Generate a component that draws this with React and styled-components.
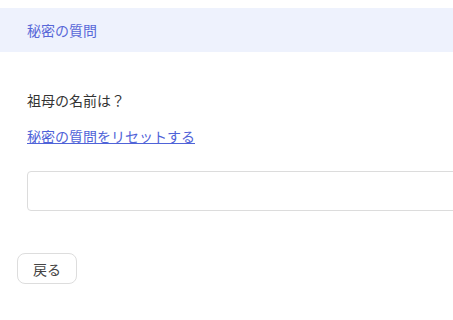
import styled, { createGlobalStyle } from 'styled-components';

const GlobalStyle = createGlobalStyle`
  body {
    margin: 0;
    background: #ffffff;
    font-family: "Noto Sans CJK JP", "Noto Sans", sans-serif;
  }
`;

const Page = styled.div`
  padding-top: 8px;
  overflow: hidden;
`;

const Header = styled.div`
  height: 44px;
  display: flex;
  align-items: center;
  padding-left: 27px;
  background-color: #eef2fd;
  color: #5868d8;
  font-size: 14px;
`;

const Content = styled.div`
  padding: 0 27px;
  display: flex;
  flex-direction: column;
  align-items: flex-start;
`;

const Question = styled.p`
  margin: 38px 0 0;
  font-size: 14px;
  line-height: 20px;
  color: #333333;
`;

const ResetLink = styled.a`
  margin-top: 16px;
  font-size: 14px;
  line-height: 20px;
  color: #4f63d8;
  text-decoration: underline;
  cursor: pointer;
`;

const AnswerInput = styled.input`
  margin-top: 25px;
  width: 480px;
  flex-shrink: 0;
  height: 40px;
  box-sizing: border-box;
  border: 1px solid #dcdcdc;
  border-radius: 4px;
  padding: 0 12px;
  font-size: 14px;
  font-family: inherit;
  outline: none;
`;

const Footer = styled.div`
  padding: 42px 17px 0;
`;

const BackButton = styled.button`
  height: 31px;
  width: 60px;
  border: 1px solid #dddddd;
  border-radius: 8px;
  background: #ffffff;
  color: #444444;
  font-size: 14px;
  font-family: inherit;
  cursor: pointer;
`;

export default function App() {
  return (
    <>
      <GlobalStyle />
      <Page>
        <Header>秘密の質問</Header>
        <Content>
          <Question>祖母の名前は？</Question>
          <ResetLink>秘密の質問をリセットする</ResetLink>
          <AnswerInput type="text" />
        </Content>
        <Footer>
          <BackButton>戻る</BackButton>
        </Footer>
      </Page>
    </>
  );
}
